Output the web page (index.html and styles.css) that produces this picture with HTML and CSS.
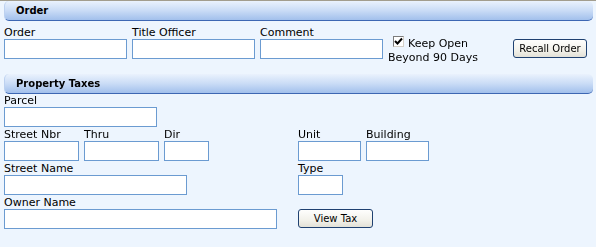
FILE: index.html
```html
<!DOCTYPE html>
<html lang="en">
<head>
  <meta charset="UTF-8" />
  <meta name="viewport" content="width=device-width, initial-scale=1" />
  <title>Order / Property Taxes</title>
  <link rel="stylesheet" href="styles.css">
</head>
<body>
  <section class="panel">
    <h2 class="panel-head">Order</h2>
    <div class="order-row">
      <div class="field">
        <label for="order">Order</label>
        <input type="text" id="order" class="w123" autofocus />
      </div>
      <div class="field">
        <label for="officer">Title Officer</label>
        <input type="text" id="officer" class="w123" />
      </div>
      <div class="field">
        <label for="comment">Comment</label>
        <input type="text" id="comment" class="w123" />
      </div>
      <div class="keep">
        <div class="keep-line">
          <span class="check">
            <svg width="9" height="9" viewBox="0 0 9 9"><path d="M1 4 L3.5 6.5 L8 1.5" fill="none" stroke="#000" stroke-width="2"/></svg>
          </span>Keep Open
        </div>
        <div>Beyond 90 Days</div>
      </div>
      <button type="button" class="btn recall">Recall Order</button>
    </div>
  </section>

  <section class="panel">
    <h2 class="panel-head">Property Taxes</h2>
    <div class="tax-grid">
      <div class="field">
        <label for="parcel">Parcel</label>
        <input type="text" id="parcel" class="w153" />
      </div>
      <div></div>

      <div class="group">
        <div class="field">
          <label for="nbr">Street Nbr</label>
          <input type="text" id="nbr" class="w75" />
        </div>
        <div class="field">
          <label for="thru">Thru</label>
          <input type="text" id="thru" class="w75" />
        </div>
        <div class="field">
          <label for="dir">Dir</label>
          <input type="text" id="dir" class="w45" />
        </div>
      </div>
      <div class="group">
        <div class="field">
          <label for="unit">Unit</label>
          <input type="text" id="unit" class="w63" />
        </div>
        <div class="field">
          <label for="building">Building</label>
          <input type="text" id="building" class="w63" />
        </div>
      </div>

      <div class="field">
        <label for="street">Street Name</label>
        <input type="text" id="street" class="w183" />
      </div>
      <div class="field">
        <label for="type">Type</label>
        <input type="text" id="type" class="w45" />
      </div>

      <div class="field">
        <label for="owner">Owner Name</label>
        <input type="text" id="owner" class="w273" />
      </div>
      <div>
        <button type="button" class="btn view">View Tax</button>
      </div>
    </div>
  </section>
</body>
</html>
```

FILE: styles.css
```css
body {
  margin: 0;
  background: #edf5fe;
  border-top: 1px solid #a29d8e;
  font-family: "DejaVu Sans", Verdana, sans-serif;
  font-size: 11px;
  color: #000;
  height: 246px;
}
.panel-head {
  margin: 0 3px 0 4px;
  height: 18px;
  padding: 1px 0 0 11px;
  line-height: 18px;
  font-size: 10px;
  font-weight: bold;
  border-bottom: 1px solid #3d67b3;
  border-left: 1px solid #bcd1f0;
  border-radius: 5px;
  background: linear-gradient(#eaf2fd, #cadcf6 50%, #a2c0ec);
}
.order-row {
  display: flex;
  column-gap: 5px;
  height: 32px;
  padding: 6px 9px 15px 4px;
}
.field {
  display: flex;
  flex-direction: column;
}
label {
  display: block;
  height: 12px;
  line-height: 12px;
}
input {
  box-sizing: border-box;
  height: 20px;
  margin: 0;
  padding: 0 2px;
  border: 1px solid #6b9bd1;
  background: #fff;
  font: inherit;
  outline: none;
}
.w123 { width: 123px; }
.w153 { width: 153px; }
.w75 { width: 75px; }
.w45 { width: 45px; }
.w63 { width: 63px; }
.w183 { width: 183px; }
.w273 { width: 273px; }

.keep {
  padding-top: 10px;
  line-height: 14px;
  white-space: nowrap;
}
.keep-line {
  display: flex;
  align-items: flex-start;
  padding-left: 5px;
}
.check {
  box-sizing: border-box;
  width: 11px;
  height: 11px;
  margin: -1px 4px 0 0;
  border: 1px solid #7c7c7c;
  border-right-color: #d4d0c8;
  border-bottom-color: #d4d0c8;
  background: #fff;
  display: flex;
  align-items: center;
  justify-content: center;
}
.check svg {
  display: block;
}
.btn {
  box-sizing: border-box;
  height: 19px;
  padding: 0;
  border: 1px solid #1f4171;
  border-radius: 3px;
  background: linear-gradient(#fefefd, #f2f1ea 60%, #e3e1d7);
  font-family: "DejaVu Sans", Verdana, sans-serif;
  font-size: 10px;
  color: #000;
  cursor: pointer;
}
.recall {
  width: 74px;
  margin: 12px 0 0 auto;
}
.view {
  width: 75px;
  margin-top: 12px;
}
.tax-grid {
  display: grid;
  grid-template-columns: 289px 1fr;
  column-gap: 5px;
  row-gap: 2px;
  padding: 1px 4px 0;
}
.group {
  display: flex;
  column-gap: 5px;
}
```
